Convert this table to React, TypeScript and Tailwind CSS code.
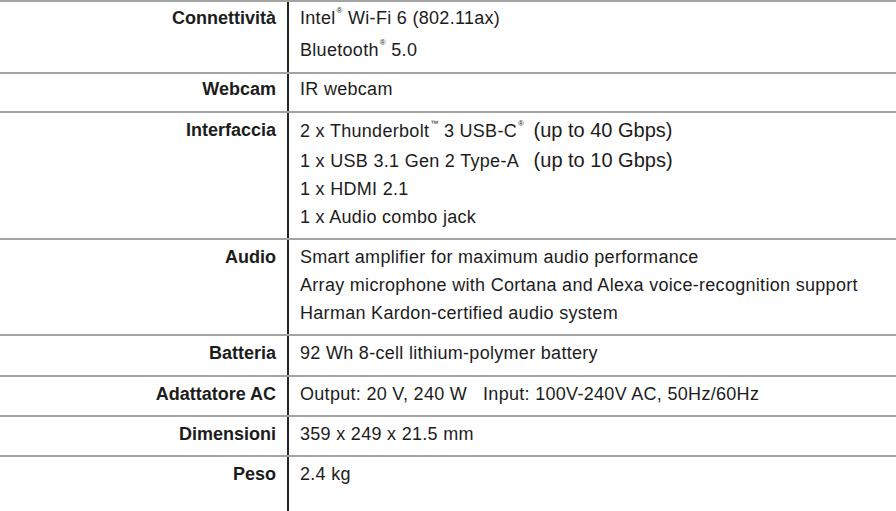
import type { ReactNode } from "react";

function Sup({ children }: { children: ReactNode }) {
  return <sup className="text-[8px] relative -top-[11px] ml-[1px]">{children}</sup>;
}

function Big({ children }: { children: ReactNode }) {
  return <span className="text-[20px] tracking-normal ml-[4px]">{children}</span>;
}

type Row = { label: string; lines: ReactNode[]; pad?: string[]; space?: string };

const rows: Row[] = [
  {
    label: "Connettività",
    lines: [
      <>Intel<Sup>®</Sup> Wi-Fi 6 (802.11ax)</>,
      <>Bluetooth<Sup>®</Sup> 5.0</>,
    ],
    pad: ["", "pt-[4px]"],
    space: "pt-[2px] pb-[8px]",
  },
  { label: "Webcam", lines: ["IR webcam"], space: "pt-[1px] pb-[8px]" },
  {
    label: "Interfaccia",
    lines: [
      <>2 x Thunderbolt<Sup>™</Sup> 3 USB-C<Sup>®</Sup> <Big>(up to 40 Gbps)</Big></>,
      <>1 x USB 3.1 Gen 2 Type-A&nbsp; <Big>(up to 10 Gbps)</Big></>,
      "1 x HDMI 2.1",
      "1 x Audio combo jack",
    ],
    pad: ["pt-[1px]", "pt-[1px]", "", ""],
    space: "pt-[2px] pb-[7px]",
  },
  {
    label: "Audio",
    lines: [
      "Smart amplifier for maximum audio performance",
      "Array microphone with Cortana and Alexa voice-recognition support",
      "Harman Kardon-certified audio system",
    ],
  },
  { label: "Batteria", lines: ["92 Wh 8-cell lithium-polymer battery"], space: "pt-[3px] pb-[8px]" },
  {
    label: "Adattatore AC",
    lines: [<>Output: 20 V, 240 W&nbsp;&nbsp; Input: 100V-240V AC, 50Hz/60Hz</>],
  },
  { label: "Dimensioni", lines: ["359 x 249 x 21.5 mm"] },
  { label: "Peso", lines: ["2.4 kg"] },
];

export default function App() {
  return (
    <div className="w-[896px] h-[511px] overflow-hidden bg-white text-[#1c1c1c] font-['Liberation_Sans',Arial,sans-serif] text-[18px]">
      {rows.map((row, i) => {
        const space = row.space ?? "pt-[3px] pb-[7px]";
        return (
          <div
            key={row.label}
            className={`grid grid-cols-[289px_1fr] border-t-2 border-[#a3a3a3] ${i === rows.length - 1 ? "min-h-[60px]" : ""}`}
          >
            <div className={`border-r-2 border-[#262626] pr-[11px] ${space} text-right font-bold`}>
              <div className={`leading-[28px] ${row.pad?.[0] ?? ""}`}>{row.label}</div>
            </div>
            <div className={`pl-[11px] ${space} tracking-[0.3px]`}>
              {row.lines.map((line, j) => (
                <div key={j} className={`leading-[28px] whitespace-nowrap ${row.pad?.[j] ?? ""}`}>
                  {line}
                </div>
              ))}
            </div>
          </div>
        );
      })}
    </div>
  );
}
